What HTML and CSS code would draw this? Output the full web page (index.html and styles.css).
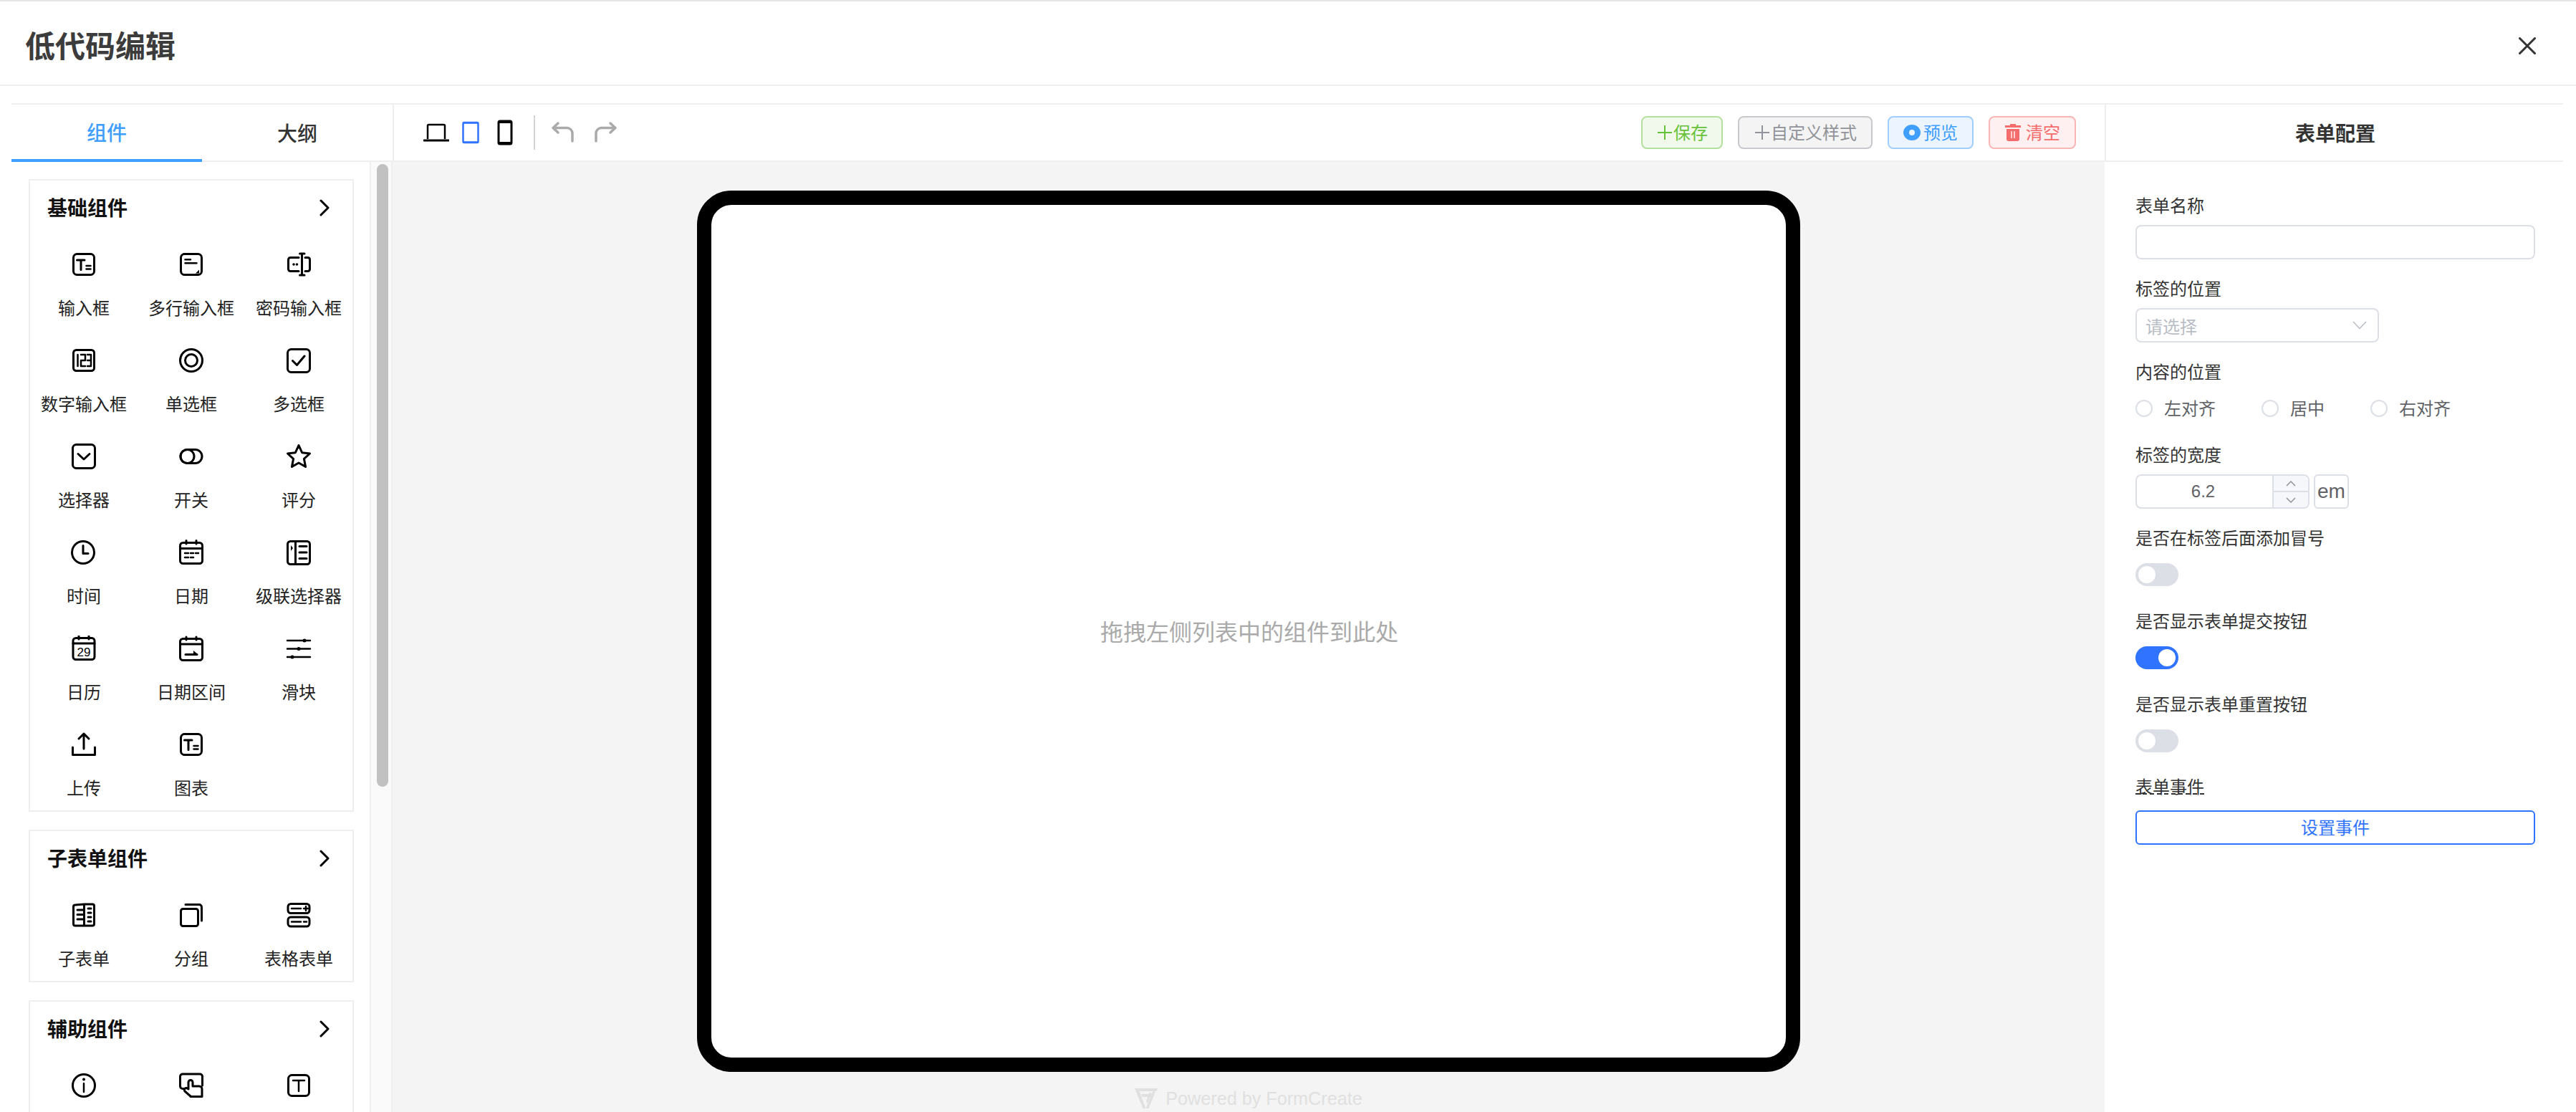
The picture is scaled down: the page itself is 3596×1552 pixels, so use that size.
FILE: index.html
```html
<!DOCTYPE html>
<html lang="zh-CN">
<head>
<meta charset="utf-8">
<title>低代码编辑</title>
<link rel="stylesheet" href="styles.css">
</head>
<body>
<div class="app">
  <header class="topbar">
    <h1 class="title">低代码编辑</h1>
    <svg class="close" viewBox="0 0 24 24"><path d="M1.5 1.5L22.5 22.5M22.5 1.5L1.5 22.5"/></svg>
  </header>
  <div class="main">
    <aside class="left">
      <div class="tabs">
        <div class="tab tab-active">组件</div>
        <div class="tab">大纲</div>
      </div>
      <div class="left-body">
        <div class="list">
          <section class="card">
            <div class="card-head"><span>基础组件</span><svg class="chev" viewBox="0 0 14 24"><path d="M2 2L12 12L2 22"/></svg></div>
            <div class="grid">
              <div class="item"><svg class="ico" viewBox="0 0 36 36"><rect x="3.5" y="3.5" width="29" height="29" rx="5"/><path d="M8.500 12H19M14 12V25.500"/><path class="thin" d="M21.500 20H27.500M21.500 24.500H27.500"/></svg><span class="lbl">输入框</span></div>
              <div class="item"><svg class="ico" viewBox="0 0 36 36"><rect x="3.5" y="3.5" width="29" height="29" rx="5"/><path class="thin" d="M9.500 11.300H17M9.500 16.300H25.500"/><path class="f" d="M24 30.500L29 30.500L29 25.500Z"/></svg><span class="lbl">多行输入框</span></div>
              <div class="item"><svg class="ico" viewBox="0 0 36 36"><path d="M18 8.500H6.500A3 3 0 0 0 3.500 11.500V24.500A3 3 0 0 0 6.500 27.500H18M27 8.500H31A3 3 0 0 1 33.500 11.500V24.500A3 3 0 0 1 31 27.500H27M22.500 3.500V32.500M19.500 3H26M19.500 33H26"/><circle class="f" cx="11" cy="18" r="1.800"/><circle class="f" cx="15.500" cy="18" r="1.800"/></svg><span class="lbl">密码输入框</span></div>
              <div class="item"><svg class="ico" viewBox="0 0 36 36"><rect x="3.500" y="3.500" width="29" height="29" rx="4"/><path class="thin" d="M9.500 10V26M14 10H20V18H14V26H20M23 10H28V26H23M23 18H28"/></svg><span class="lbl">数字输入框</span></div>
              <div class="item"><svg class="ico" viewBox="0 0 36 36"><circle cx="18" cy="18" r="15.500"/><circle cx="18" cy="18" r="8.500"/></svg><span class="lbl">单选框</span></div>
              <div class="item"><svg class="ico" viewBox="0 0 36 36"><rect x="2.500" y="2.500" width="31" height="32" rx="5"/><path d="M9.500 18.500L15.500 24.500L26 12"/></svg><span class="lbl">多选框</span></div>
              <div class="item"><svg class="ico" viewBox="0 0 36 36"><rect x="2.500" y="1.500" width="31" height="33" rx="5"/><path d="M10 14.500L18 22L26 14.500"/></svg><span class="lbl">选择器</span></div>
              <div class="item"><svg class="ico" viewBox="0 0 36 36"><rect x="3" y="8.500" width="30" height="19" rx="9.500"/><circle cx="12.500" cy="18" r="9.500"/></svg><span class="lbl">开关</span></div>
              <div class="item"><svg class="ico" viewBox="0 0 36 36"><path d="M18 2.500L22.600 12.700L33.500 14L25.400 21.400L27.600 32.500L18 27L8.400 32.500L10.600 21.400L2.500 14L13.400 12.700Z"/></svg><span class="lbl">评分</span></div>
              <div class="item"><svg class="ico" viewBox="0 0 36 36"><circle cx="17" cy="18" r="15.500"/><path d="M17 8.500V19.500H24"/></svg><span class="lbl">时间</span></div>
              <div class="item"><svg class="ico" viewBox="0 0 36 36"><rect x="2.500" y="4.500" width="31" height="29" rx="4"/><path d="M3 12.500H33M11 1.500V6M25 1.500V6"/><path class="thin" d="M9 19H14M17 19H21M24 19H28M9 25H14M17 25H21"/></svg><span class="lbl">日期</span></div>
              <div class="item"><svg class="ico" viewBox="0 0 36 36"><rect x="2.500" y="2.500" width="31" height="32" rx="4"/><path d="M13.500 3V34M19 9.500H29M19 18H29M19 26.500H29"/><path class="f" d="M7 8L10 12L7 16Z"/></svg><span class="lbl">级联选择器</span></div>
              <div class="item"><svg class="ico" viewBox="0 0 36 36"><rect x="3" y="3.500" width="30" height="30" rx="4"/><path d="M3 11H33M11 0.500V5M25 0.500V5"/><text class="num" x="18" y="29" text-anchor="middle">29</text></svg><span class="lbl">日历</span></div>
              <div class="item"><svg class="ico" viewBox="0 0 36 36"><rect x="2.500" y="4.500" width="31" height="30" rx="4"/><path d="M3 12H33M11 2V6M25 2V6M10 26.500H26"/><path class="f" d="M21 21L27 26L21 26Z"/></svg><span class="lbl">日期区间</span></div>
              <div class="item"><svg class="ico" viewBox="0 0 36 36"><path class="thin" d="M2 7H34M2 18.500H34M2 30H34"/><circle class="f" cx="26" cy="7" r="2.500"/><circle class="f" cx="18" cy="18.500" r="2.500"/><circle class="f" cx="9" cy="30" r="2.500"/></svg><span class="lbl">滑块</span></div>
              <div class="item"><svg class="ico" viewBox="0 0 36 36"><path d="M18 3V24M11 10L18 3L25 10M2.500 22V32.500H33.500V22"/></svg><span class="lbl">上传</span></div>
              <div class="item"><svg class="ico" viewBox="0 0 36 36"><rect x="3.5" y="3.5" width="29" height="29" rx="5"/><path d="M8.500 12H19M14 12V25.500"/><path class="thin" d="M21.500 20H27.500M21.500 24.500H27.500"/></svg><span class="lbl">图表</span></div>
            </div>
          </section>
          <section class="card">
            <div class="card-head"><span>子表单组件</span><svg class="chev" viewBox="0 0 14 24"><path d="M2 2L12 12L2 22"/></svg></div>
            <div class="grid">
              <div class="item"><svg class="ico" viewBox="0 0 36 36"><path d="M3.500 6.500A2.500 2.500 0 0 1 6 4L18.500 3V33H6A2.500 2.500 0 0 1 3.500 30.500ZM18.500 3H30A2.500 2.500 0 0 1 32.500 5.500V30.500A2.500 2.500 0 0 1 30 33H18.500M9 11H18.500M9 17.500H18.500M9 24H18.500M24 9H28M24 15H28M24 21H28M24 27H28"/></svg><span class="lbl">子表单</span></div>
              <div class="item"><svg class="ico" viewBox="0 0 36 36"><rect x="3.500" y="9.500" width="24" height="24" rx="3"/><path d="M10 3.500H29A3.500 3.500 0 0 1 32.500 7V26"/></svg><span class="lbl">分组</span></div>
              <div class="item"><svg class="ico" viewBox="0 0 36 36"><rect x="3" y="2.500" width="30" height="13" rx="4"/><rect x="3" y="21" width="30" height="13" rx="4"/><path class="thin" d="M8 9H21M25 9H31M28 6V12M8 27.500H21M25 27.500H29"/></svg><span class="lbl">表格表单</span></div>
            </div>
          </section>
          <section class="card">
            <div class="card-head"><span>辅助组件</span><svg class="chev" viewBox="0 0 14 24"><path d="M2 2L12 12L2 22"/></svg></div>
            <div class="grid">
              <div class="item"><svg class="ico" viewBox="0 0 36 36"><circle cx="18" cy="18" r="15.500"/><path class="thin" d="M18 15V27"/><circle class="f" cx="18" cy="9.500" r="2"/></svg></div>
              <div class="item"><svg class="ico" viewBox="0 0 36 36"><path d="M9 22.500H6A3.500 3.500 0 0 1 2.500 19V5.500A3.500 3.500 0 0 1 6 2H30A3.500 3.500 0 0 1 33.500 5.500V18M17 33L9 26A2.500 2.500 0 0 1 13 22.500L14 23V13.500A3 3 0 0 1 20 13.500V19H29A4 4 0 0 1 33 23V33.500H17Z"/></svg></div>
              <div class="item"><svg class="ico" viewBox="0 0 36 36"><rect x="3.500" y="3.500" width="29" height="29" rx="5"/><path class="thin" d="M10 11H26M18 11V26"/></svg></div>
            </div>
          </section>
        </div>
        <div class="track"><div class="thumb"></div></div>
      </div>
    </aside>
    <section class="center">
      <div class="toolbar">
        <svg class="tool tool-laptop" viewBox="0 0 36 36"><path class="tool-thin" d="M6 27V8.500A1.500 1.500 0 0 1 7.500 7H28.500A1.500 1.500 0 0 1 30 8.500V27"/><path class="tool-base" d="M1 29H35"/></svg>
        <svg class="tool tool-blue" viewBox="0 0 36 36"><rect x="7.500" y="4" width="21" height="28" rx="1.500"/><path d="M7.500 4.500H28.500M7.500 31.500H28.500"/></svg>
        <svg class="tool tool-phone" viewBox="0 0 36 36"><rect x="9" y="2" width="18" height="32" rx="2"/><path d="M9 3.500H27M9 32.500H27"/></svg>
        <span class="tool-sep"></span>
        <svg class="tool tool-grey" viewBox="0 0 36 36"><path d="M11 5L4 11.500L11 18M4 11.500H24A8 8 0 0 1 31 19V30"/></svg>
        <svg class="tool tool-grey tool-redo" viewBox="0 0 36 36"><path d="M25 5L32 11.500L25 18M32 11.500H12A8 8 0 0 0 5 19V30"/></svg>
        <div class="actions">
          <div class="btn btn-green"><svg class="btn-ico" viewBox="0 0 24 24"><path d="M2 12H22M12 2V22"/></svg>保存</div>
          <div class="btn btn-grey"><svg class="btn-ico" viewBox="0 0 24 24"><path d="M2 12H22M12 2V22"/></svg>自定义样式</div>
          <div class="btn btn-blue"><svg class="btn-ico btn-ico-wide" viewBox="0 0 26 24"><ellipse class="solid" cx="12" cy="12" rx="12" ry="11"/><circle class="hole" cx="12" cy="12" r="4"/></svg>预览</div>
          <div class="btn btn-red"><svg class="btn-ico btn-ico-wide btn-ico-trash" viewBox="0 0 26 24"><path class="solid" d="M8 0H16V2H23V5H1V2H8ZM3 7H21V21A3 3 0 0 1 18 24H6A3 3 0 0 1 3 21Z"/><path class="slot" d="M10 10V20M14 10V20"/></svg>清空</div>
        </div>
      </div>
      <div class="canvas">
        <div class="device"><span class="hint">拖拽左侧列表中的组件到此处</span></div>
        <div class="powered">
          <svg class="logo" viewBox="0 0 32 28"><path d="M0 0H32L30.500 4H6.500L15.500 28H11.500ZM9 8H25L23.500 12H10.500ZM19.500 28H15.500L25 4.500H29ZM16 18L20.500 6H23.500L18 21Z"/></svg>
          <span>Powered by FormCreate</span>
        </div>
      </div>
    </section>
    <aside class="right">
      <div class="right-head">表单配置</div>
      <form class="form">
        <div class="field"><label class="flabel">表单名称</label><div class="control"><div class="input input-full"></div></div></div>
        <div class="field"><label class="flabel">标签的位置</label><div class="control"><div class="input select"><span class="placeholder">请选择</span><svg class="select-arrow" viewBox="0 0 20 12"><path d="M1 1L10 10.500L19 1"/></svg></div></div></div>
        <div class="field"><label class="flabel">内容的位置</label><div class="control radios">
          <span class="radio"><i class="radio-dot"></i>左对齐</span>
          <span class="radio"><i class="radio-dot"></i>居中</span>
          <span class="radio"><i class="radio-dot"></i>右对齐</span>
        </div></div>
        <div class="field"><label class="flabel">标签的宽度</label><div class="control">
          <div class="number">
            <span class="number-val">6.2</span>
            <span class="number-ctrl">
              <span class="step"><svg viewBox="0 0 14 8"><path d="M1 7L7 1L13 7"/></svg></span>
              <span class="step step-down"><svg viewBox="0 0 14 8"><path d="M1 1L7 7L13 1"/></svg></span>
            </span>
          </div>
          <span class="unit">em</span>
        </div></div>
        <div class="field"><label class="flabel">是否在标签后面添加冒号</label><div class="control"><span class="switch"></span></div></div>
        <div class="field"><label class="flabel">是否显示表单提交按钮</label><div class="control"><span class="switch switch-on"></span></div></div>
        <div class="field"><label class="flabel">是否显示表单重置按钮</label><div class="control"><span class="switch"></span></div></div>
        <div class="field"><label class="flabel flabel-gap"><span class="dashed">表单事件</span></label><div class="control"><div class="event-btn">设置事件</div></div></div>
      </form>
    </aside>
  </div>
</div>
</body>
</html>
```
FILE: styles.css
```css
* { box-sizing: border-box; }
html, body { margin: 0; height: 100%; }
body {
  background: #fff;
  color: #333;
  font-family: "Noto Sans CJK SC", "Noto Sans", "Liberation Sans", sans-serif;
  overflow: hidden;
}
.app { width: 3596px; height: 1552px; display: flex; flex-direction: column; overflow: hidden; border-top: 2px solid #e5e5e5; }

.topbar { height: 118px; flex: none; display: flex; align-items: center; justify-content: space-between; padding: 0 56px 0 35px; border-bottom: 2px solid #eee; }
.title { margin: 0; padding-top: 4px; font-size: 42px; font-weight: 700; color: #3c3c3c; line-height: 1; }
.close { width: 24px; height: 24px; margin-top: 8px; fill: none; stroke: #333; stroke-width: 3; stroke-linecap: round; }

.main { flex: 1; min-height: 0; display: flex; margin: 24px 18px 0 16px; border-top: 2px solid #eee; }

.left { width: 532px; flex: none; display: flex; flex-direction: column; }
.tabs { height: 80px; flex: none; display: flex; border-bottom: 2px solid #eee; }
.tab { width: 266px; height: 80px; display: flex; align-items: center; justify-content: center; font-size: 28px; font-weight: 500; color: #333; padding-bottom: 2px; }
.tab-active { color: #409eff; border-bottom: 4px solid #409eff; padding-bottom: 0; }

.left-body { flex: 1; min-height: 0; display: flex; }
.list { width: 502px; flex: none; padding: 24px 0 0 24px; border-right: 2px solid #eee; display: flex; flex-direction: column; gap: 25px; }
.card { width: 454px; flex: none; border: 2px solid #eee; }
.card-head { height: 76px; display: flex; align-items: center; justify-content: space-between; padding: 0 32px 0 24px; font-size: 28px; font-weight: 700; color: #111; }
.card-head span { padding-bottom: 2px; }
.chev { width: 14px; height: 24px; fill: none; stroke: #000; stroke-width: 3; stroke-linecap: round; stroke-linejoin: round; }
.grid { display: grid; grid-template-columns: repeat(3, 150px); row-gap: 24px; padding: 17px 0 6px; }
.item { height: 110px; display: flex; flex-direction: column; align-items: center; }
.ico { width: 36px; height: 36px; margin: 6px 0; flex: none; fill: none; stroke: #000; stroke-width: 3; stroke-linecap: round; stroke-linejoin: round; }
.ico .thin { stroke-width: 2.5; }
.ico .f { fill: #000; stroke: none; }
.ico .num { font-family: "Liberation Sans", sans-serif; font-size: 17px; fill: #000; stroke: none; }
.lbl { margin-top: 18px; height: 36px; line-height: 36px; font-size: 24px; color: #222; white-space: nowrap; }

.track { width: 30px; flex: none; background: #fafafa; border-right: 2px solid #eee; padding: 3px 0 0 8px; }
.thumb { width: 16px; height: 869px; border-radius: 8px; background: #c1c1c1; }

.center { flex: 1; min-width: 0; display: flex; flex-direction: column; }
.toolbar { height: 80px; flex: none; display: flex; align-items: center; padding: 0 40px 0 41px; border-left: 2px solid #eee; border-bottom: 2px solid #eee; gap: 12px; }
.tool { width: 36px; height: 36px; flex: none; fill: none; }
.tool-laptop { stroke: #000; }
.tool-laptop .tool-thin { stroke-width: 2.5; }
.tool-laptop .tool-base { stroke-width: 3; stroke-linecap: round; }
.tool-blue { stroke: #3073ff; stroke-width: 2.5; }
.tool-phone { stroke: #000; stroke-width: 3; }
.tool-grey { stroke: #aaa; stroke-width: 3.5; stroke-linecap: round; stroke-linejoin: round; }
.tool-redo { margin-left: 11px; }
.tool-sep { width: 2px; height: 48px; background: #d4d4d4; flex: none; margin: 0 9px 0 10px; }
.actions { margin-left: auto; display: flex; gap: 21px; }
.btn { height: 46px; padding: 0 20px 2px; border: 2px solid; border-radius: 8px; display: flex; align-items: center; font-size: 24px; line-height: 1; white-space: nowrap; }
.btn-ico { width: 24px; height: 24px; margin-top: 2px; flex: none; fill: none; stroke: currentColor; stroke-width: 2; }
.btn-ico-wide { width: 26px; margin-right: 2px; }
.btn-ico-trash { margin-right: 4px; }
.btn-ico .solid { fill: currentColor; stroke: none; }
.btn-blue .hole { fill: #ecf5ff; stroke: none; }
.btn-red .slot { stroke: #fef0f0; stroke-width: 1.5; }
.btn-green { padding: 0 19px 2px; background: #f0f9eb; border-color: #b3e19d; color: #67c23a; }
.btn-grey { background: #f4f4f5; border-color: #c8c9cc; color: #909399; }
.btn-blue { background: #ecf5ff; border-color: #a0cfff; color: #409eff; }
.btn-red { background: #fef0f0; border-color: #fab6b6; color: #f56c6c; }

.canvas { flex: 1; min-height: 0; background: #f4f4f4; display: flex; flex-direction: column; align-items: center; padding-top: 40px; }
.device { width: 1540px; height: 1230px; flex: none; background: #fff; border: 20px solid #000; border-radius: 48px; display: flex; align-items: center; justify-content: center; font-size: 32px; color: #aaa; }
.hint { padding: 0 0 3px 2px; }
.powered { margin-top: 21px; height: 32px; flex: none; display: flex; align-items: center; gap: 11px; font-family: "Liberation Sans", sans-serif; font-size: 25.2px; color: #e0e0e0; }
.logo { width: 32px; height: 28px; fill: #e0e0e0; }

.right { width: 640px; flex: none; display: flex; flex-direction: column; }
.right-head { height: 80px; flex: none; padding-left: 2px; border-left: 2px solid #eee; border-bottom: 2px solid #eee; display: flex; align-items: center; justify-content: center; font-size: 28px; font-weight: 700; color: #333; }
.form { padding: 39px 39px 0 43px; }
.field { margin-bottom: 19px; }
.flabel { display: flex; align-items: center; height: 44px; padding-bottom: 4px; margin-bottom: 5px; font-size: 24px; color: #333; }
.flabel-gap { margin-bottom: 10px; }
.dashed { line-height: 24px; height: 24px; border-bottom: 2px dashed #333; }
.control { height: 48px; display: flex; align-items: center; }
.input { height: 48px; border: 2px solid #dcdfe6; border-radius: 8px; background: #fff; }
.input-full { width: 100%; }
.select { width: 340px; display: flex; align-items: center; justify-content: space-between; padding: 0 15px 0 12px; }
.placeholder { font-size: 24px; color: #b8bcc4; }
.select-arrow { width: 20px; height: 12px; fill: none; stroke: #b8bcc4; stroke-width: 1.500; }
.radios { gap: 64px; }
.radio { display: flex; align-items: center; padding-bottom: 3px; font-size: 24px; color: #606266; }
.radio-dot { width: 24px; height: 24px; margin-top: 3px; border: 2px solid #dcdfe6; border-radius: 50%; margin-right: 16px; background: #fff; }
.number { width: 243px; height: 48px; border: 2px solid #dcdfe6; border-radius: 8px; display: flex; overflow: hidden; }
.number-val { flex: 1; display: flex; align-items: center; justify-content: center; padding-right: 4px; font-family: "Liberation Sans", sans-serif; font-size: 24px; color: #606266; }
.number-ctrl { width: 50px; flex: none; border-left: 2px solid #dcdfe6; background: #f5f7fa; display: flex; flex-direction: column; }
.step { flex: 1; display: flex; align-items: center; justify-content: center; }
.step-down { border-top: 2px solid #dcdfe6; }
.step svg { width: 14px; height: 8px; fill: none; stroke: #909399; stroke-width: 1.500; }
.unit { margin-left: 6px; width: 49px; height: 48px; border: 2px solid #dcdfe6; border-radius: 6px; display: flex; align-items: center; justify-content: center; font-family: "Liberation Sans", sans-serif; font-size: 28px; color: #606266; }
.switch { width: 60px; height: 32px; border-radius: 16px; background: #dcdfe6; padding: 4px; display: flex; }
.switch::after { content: ""; width: 24px; height: 24px; border-radius: 50%; background: #fff; }
.switch-on { background: #3073ff; justify-content: flex-end; }
.event-btn { width: 100%; height: 48px; padding-bottom: 3px; border: 2px solid #3073ff; border-radius: 6px; display: flex; align-items: center; justify-content: center; font-size: 24px; color: #3073ff; }
```
